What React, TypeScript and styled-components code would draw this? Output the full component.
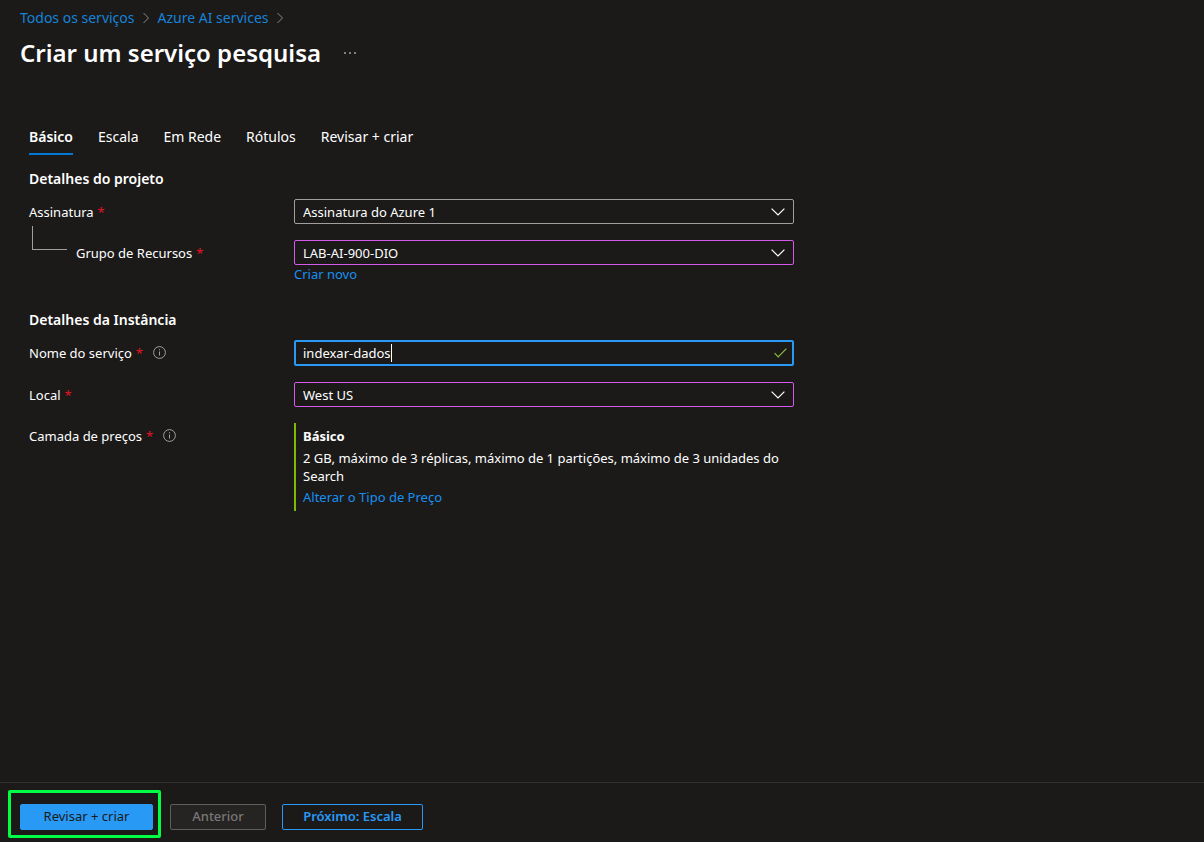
import React, { useState } from "react";
import styled, { createGlobalStyle, css } from "styled-components";

const GlobalStyle = createGlobalStyle`
  *, *::before, *::after { box-sizing: border-box; }
  body {
    margin: 0;
    background: #1b1a19;
    color: #ffffff;
    font-family: "Segoe UI", "Noto Sans", "Open Sans", sans-serif;
    font-size: 13px;
    line-height: 18px;
  }
`;

const Page = styled.div`
  display: flex;
  flex-direction: column;
  min-height: 100vh;
`;

const Header = styled.header`
  padding: 8px 20px 0;
`;

const Breadcrumb = styled.nav`
  display: flex;
  align-items: center;
  gap: 8px;
  height: 20px;
  font-size: 14px;
`;

const Link = styled.a<{ $muted?: boolean }>`
  color: ${(p) => (p.$muted ? "#1683d8" : "#1890f1")};
  text-decoration: none;
  &:hover { text-decoration: underline; }
`;

const TitleRow = styled.div`
  display: flex;
  align-items: center;
  gap: 23px;
  margin-top: 7px;
`;

const Title = styled.h1`
  margin: 0;
  font-size: 24px;
  line-height: 36px;
  font-weight: 600;
`;

const MoreButton = styled.button`
  display: flex;
  padding: 0;
  border: 0;
  background: none;
  color: #ffffff;
`;

const Main = styled.main`
  flex: 1;
  padding: 53px 29px 24px;
`;

const Tabs = styled.div`
  display: flex;
  gap: 25px;
`;

const Tab = styled.button<{ $active?: boolean }>`
  height: 31px;
  padding: 0 0 3px;
  border: 0;
  border-bottom: 2px solid ${(p) => (p.$active ? "#0078d4" : "transparent")};
  background: none;
  color: inherit;
  font: inherit;
  font-size: 14px;
  font-weight: ${(p) => (p.$active ? 600 : 400)};
`;

const Section = styled.section`
  padding-top: 14px;
  & + & { padding-top: 27px; }
`;

const SectionTitle = styled.h2`
  margin: 0 0 10px;
  font-size: 14px;
  line-height: 20px;
  font-weight: 600;
`;

const Rows = styled.div`
  display: grid;
  gap: 16px;
`;

const Row = styled.div`
  display: grid;
  grid-template-columns: 265px minmax(0, 500px);
`;

const LabelCell = styled.div<{ $nested?: boolean }>`
  display: flex;
  align-items: center;
  align-self: start;
  gap: 4px;
  height: 25px;
  ${(p) =>
    p.$nested &&
    css`
      position: relative;
      padding-left: 47px;
      &::before {
        content: "";
        position: absolute;
        left: 3px;
        bottom: 15px;
        width: 35px;
        height: 24px;
        border-left: 1px solid #a19f9d;
        border-bottom: 1px solid #a19f9d;
      }
    `}
`;

const Required = styled.span`
  color: #e81123;
`;

const InfoButton = styled.button`
  display: flex;
  margin-left: 6px;
  padding: 0;
  border: 0;
  background: none;
  color: #a19f9d;
`;

const SelectBox = styled.div`
  position: relative;
  height: 25px;
  svg {
    position: absolute;
    right: 9px;
    top: 9px;
    pointer-events: none;
  }
`;

const Select = styled.select<{ $edited?: boolean }>`
  display: block;
  appearance: none;
  width: 100%;
  height: 100%;
  padding: 0 32px 0 8px;
  border: 1px solid ${(p) => (p.$edited ? "#d45aec" : "#a19f9d")};
  border-radius: 2px;
  background: #1b1a19;
  color: inherit;
  font: inherit;
  outline: none;
`;

const TextBox = styled.div`
  display: flex;
  align-items: center;
  height: 26px;
  padding: 0 5px 0 7px;
  border: 2px solid #2899f5;
  border-radius: 2px;
  svg { margin-left: auto; }
`;

const Input = styled.input`
  field-sizing: content;
  min-width: 1px;
  padding: 0;
  border: 0;
  background: none;
  color: inherit;
  font: inherit;
  outline: none;
  caret-color: transparent;
`;

const Caret = styled.span`
  width: 1px;
  height: 18px;
  background: #ffffff;
`;

const Tier = styled.div`
  padding: 4px 9px 5px 7px;
  border-left: 2px solid #7fba00;
  p { margin: 4px 0 3px; }
`;

const Footer = styled.footer`
  display: flex;
  align-items: flex-start;
  height: 60px;
  padding: 7px 8px 0;
  border-top: 1px solid #323130;
`;

const Highlight = styled.div`
  margin-right: 9px;
  padding: 11px 5px 5px 9px;
  border: 3px solid #00ff44;
  border-radius: 2px;
`;

const Button = styled.button<{ $kind: "primary" | "disabled" | "outline" }>`
  display: block;
  height: 26px;
  padding: 0 20px 2px;
  border: 1px solid #2899f5;
  border-radius: 2px;
  font: inherit;
  line-height: 18px;
  white-space: nowrap;
  ${(p) =>
    p.$kind === "primary" &&
    css`
      min-width: 133px;
      background: #2899f5;
      color: #1b1a19;
    `}
  ${(p) =>
    p.$kind === "disabled" &&
    css`
      min-width: 96px;
      margin: 14px 16px 0 0;
      border-color: #605e5c;
      background: #252423;
      color: #797775;
      font-weight: 500;
    `}
  ${(p) =>
    p.$kind === "outline" &&
    css`
      min-width: 141px;
      margin-top: 14px;
      background: #1b1a19;
      color: #2899f5;
      font-weight: 600;
    `}
`;

const Separator = () => (
  <svg width="7" height="12" viewBox="0 0 7 12" fill="none" stroke="#8a8886" aria-hidden="true">
    <path d="M.5 1l5 5-5 5" />
  </svg>
);

const Chevron = () => (
  <svg width="14" height="8" viewBox="0 0 14 8" fill="none" stroke="#ffffff" strokeWidth="1.2" aria-hidden="true">
    <path d="M.6 .6L7 7L13.4 .6" />
  </svg>
);

const Check = () => (
  <svg width="13" height="10" viewBox="0 0 13 10" fill="none" stroke="#8cbd3f" strokeWidth="1.2" aria-hidden="true">
    <path d="M.6 5.2L4.2 8.8L12.4 .6" />
  </svg>
);

const Info = () => (
  <InfoButton type="button" aria-label="Informações">
    <svg width="13" height="13" viewBox="0 0 13 13" fill="none" stroke="currentColor" aria-hidden="true">
      <circle cx="6.5" cy="6.5" r="5.9" />
      <path d="M6.5 5.5v4M6.5 3.2v1.1" />
    </svg>
  </InfoButton>
);

const tabs = ["Básico", "Escala", "Em Rede", "Rótulos", "Revisar + criar"];

type FieldProps = { id: string; label: string; value: string; edited?: boolean; nested?: boolean; children?: React.ReactNode };

const SelectField = ({ id, label, value, edited, nested, children }: FieldProps) => (
  <Row>
    <LabelCell $nested={nested}>
      <label htmlFor={id}>{label}</label>
      <Required>*</Required>
    </LabelCell>
    <div>
      <SelectBox>
        <Select id={id} $edited={edited} defaultValue={value}>
          <option>{value}</option>
        </Select>
        <Chevron />
      </SelectBox>
      {children}
    </div>
  </Row>
);

export default function App() {
  const [name, setName] = useState("indexar-dados");
  return (
    <Page>
      <GlobalStyle />
      <Header>
        <Breadcrumb>
          <Link href="#servicos" $muted>Todos os serviços</Link>
          <Separator />
          <Link href="#azure-ai" $muted>Azure AI services</Link>
          <Separator />
        </Breadcrumb>
        <TitleRow>
          <Title>Criar um serviço pesquisa</Title>
          <MoreButton type="button" aria-label="Mais">
            <svg width="12" height="2" viewBox="0 0 12 2" fill="currentColor" aria-hidden="true">
              <circle cx="1" cy="1" r=".8" />
              <circle cx="6" cy="1" r=".8" />
              <circle cx="11" cy="1" r=".8" />
            </svg>
          </MoreButton>
        </TitleRow>
      </Header>
      <Main>
        <Tabs role="tablist">
          {tabs.map((t, i) => (
            <Tab key={t} type="button" role="tab" aria-selected={i === 0} $active={i === 0}>{t}</Tab>
          ))}
        </Tabs>
        <Section>
          <SectionTitle>Detalhes do projeto</SectionTitle>
          <Rows>
            <SelectField id="sub" label="Assinatura" value="Assinatura do Azure 1" />
            <SelectField id="group" label="Grupo de Recursos" value="LAB-AI-900-DIO" edited nested>
              <Link href="#novo">Criar novo</Link>
            </SelectField>
          </Rows>
        </Section>
        <Section>
          <SectionTitle>Detalhes da Instância</SectionTitle>
          <Rows>
            <Row>
              <LabelCell>
                <label htmlFor="name">Nome do serviço</label>
                <Required>*</Required>
                <Info />
              </LabelCell>
              <TextBox>
                <Input id="name" value={name} onChange={(e) => setName(e.target.value)} />
                <Caret />
                <Check />
              </TextBox>
            </Row>
            <SelectField id="region" label="Local" value="West US" edited />
            <Row>
              <LabelCell>
                <span>Camada de preços</span>
                <Required>*</Required>
                <Info />
              </LabelCell>
              <Tier>
                <strong>Básico</strong>
                <p>2 GB, máximo de 3 réplicas, máximo de 1 partições, máximo de 3 unidades do Search</p>
                <Link href="#preco">Alterar o Tipo de Preço</Link>
              </Tier>
            </Row>
          </Rows>
        </Section>
      </Main>
      <Footer>
        <Highlight>
          <Button type="button" $kind="primary">Revisar + criar</Button>
        </Highlight>
        <Button type="button" $kind="disabled" disabled>Anterior</Button>
        <Button type="button" $kind="outline">Próximo: Escala</Button>
      </Footer>
    </Page>
  );
}
